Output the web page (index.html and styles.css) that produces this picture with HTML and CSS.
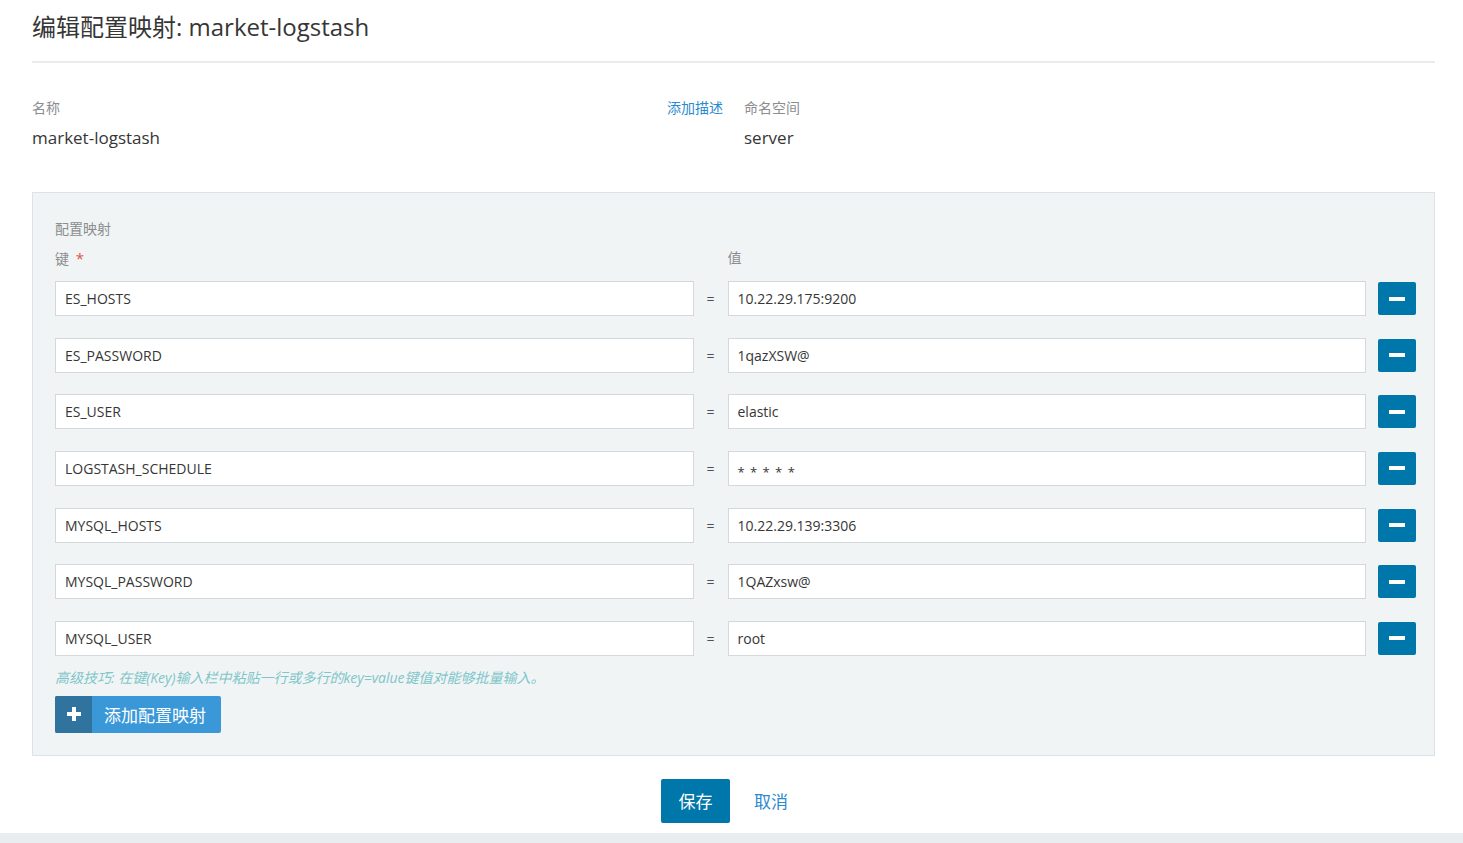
FILE: index.html
```html
<!DOCTYPE html>
<html lang="zh">
<head>
<meta charset="utf-8">
<title>编辑配置映射</title>
<link rel="stylesheet" href="styles.css">
</head>
<body>
<div class="page">
  <header class="head">
    <h1 class="title">编辑配置映射: market-logstash</h1>
  </header>

  <section class="meta">
    <div class="meta-col">
      <div class="meta-top">
        <span class="label">名称</span>
        <a class="link">添加描述</a>
      </div>
      <div class="meta-value">market-logstash</div>
    </div>
    <div class="meta-col">
      <div class="meta-top"><span class="label">命名空间</span></div>
      <div class="meta-value">server</div>
    </div>
  </section>

  <section class="panel">
    <div class="label panel-title">配置映射</div>
    <div class="kv-row kv-head">
      <div class="kv-cell label">键 <span class="req">*</span></div>
      <div class="kv-eq"></div>
      <div class="kv-cell label">值</div>
      <div class="kv-btn-space"></div>
    </div>

    <div class="kv-list">
      <div class="kv-row">
        <div class="kv-cell"><div class="input">ES_HOSTS</div></div>
        <div class="kv-eq">=</div>
        <div class="kv-cell"><div class="input">10.22.29.175:9200</div></div>
        <button class="minus"><span class="bar"></span></button>
      </div>
      <div class="kv-row">
        <div class="kv-cell"><div class="input">ES_PASSWORD</div></div>
        <div class="kv-eq">=</div>
        <div class="kv-cell"><div class="input">1qazXSW@</div></div>
        <button class="minus"><span class="bar"></span></button>
      </div>
      <div class="kv-row">
        <div class="kv-cell"><div class="input">ES_USER</div></div>
        <div class="kv-eq">=</div>
        <div class="kv-cell"><div class="input">elastic</div></div>
        <button class="minus"><span class="bar"></span></button>
      </div>
      <div class="kv-row">
        <div class="kv-cell"><div class="input">LOGSTASH_SCHEDULE</div></div>
        <div class="kv-eq">=</div>
        <div class="kv-cell"><div class="input stars">* * * * *</div></div>
        <button class="minus"><span class="bar"></span></button>
      </div>
      <div class="kv-row">
        <div class="kv-cell"><div class="input">MYSQL_HOSTS</div></div>
        <div class="kv-eq">=</div>
        <div class="kv-cell"><div class="input">10.22.29.139:3306</div></div>
        <button class="minus"><span class="bar"></span></button>
      </div>
      <div class="kv-row">
        <div class="kv-cell"><div class="input">MYSQL_PASSWORD</div></div>
        <div class="kv-eq">=</div>
        <div class="kv-cell"><div class="input">1QAZxsw@</div></div>
        <button class="minus"><span class="bar"></span></button>
      </div>
      <div class="kv-row">
        <div class="kv-cell"><div class="input">MYSQL_USER</div></div>
        <div class="kv-eq">=</div>
        <div class="kv-cell"><div class="input">root</div></div>
        <button class="minus"><span class="bar"></span></button>
      </div>
    </div>

    <p class="hint">高级技巧: 在键(Key)输入栏中粘贴一行或多行的key=value键值对能够批量输入。</p>

    <button class="add-btn">
      <span class="add-icon">
        <svg width="14" height="14" viewBox="0 0 14 14"><rect x="5" y="0" width="4" height="14" fill="#fff"/><rect x="0" y="5" width="14" height="4" fill="#fff"/></svg>
      </span>
      <span class="add-text">添加配置映射</span>
    </button>
  </section>

  <div class="actions">
    <button class="save">保存</button>
    <a class="cancel">取消</a>
  </div>
</div>
<div class="footer-bar"></div>
</body>
</html>
```

FILE: styles.css
```css
* { box-sizing: border-box; }

html, body {
  margin: 0;
  padding: 0;
  background: #ffffff;
}

body {
  font-family: "Open Sans", "Noto Sans CJK SC", sans-serif;
  color: #363636;
}

.page {
  padding: 0 28px 0 32px;
}

.head {
  height: 63px;
  padding-top: 8px;
  border-bottom: 2px solid #e8ecee;
}

.title {
  margin: 0;
  font-size: 24px;
  line-height: 38px;
  font-weight: 400;
  color: #363636;
}

.meta {
  display: grid;
  grid-template-columns: 1fr 1fr;
  column-gap: 21px;
  margin-top: 36px;
}

.meta-top {
  display: flex;
  justify-content: space-between;
  align-items: center;
  height: 18px;
}

.label {
  font-size: 14px;
  line-height: 18px;
  color: #8b8d8f;
}

.link {
  font-size: 14px;
  line-height: 18px;
  color: #2a8ad0;
  cursor: pointer;
}

.meta-value {
  margin-top: 9px;
  font-size: 17px;
  line-height: 24px;
  color: #363636;
}

.panel {
  margin-top: 42px;
  background: #f1f4f5;
  border: 1px solid #dce3e6;
  padding: 27px 18px 22px 22px;
}

.panel-title {
  margin-bottom: 11px;
}

.kv-row {
  display: flex;
  align-items: center;
}

.kv-head {
  margin-bottom: 14px;
  height: 18px;
}

.kv-cell {
  flex: 1 1 0;
  min-width: 0;
}

.req {
  color: #e2514d;
  margin-left: 3px;
  font-size: 15px;
}

.kv-eq {
  width: 34px;
  flex: none;
  text-align: center;
  font-size: 14px;
  color: #4d5258;
}

.kv-btn-space {
  width: 50px;
  flex: none;
}

.kv-list {
  display: flex;
  flex-direction: column;
  gap: 21.67px;
}

.input {
  height: 35px;
  background: #ffffff;
  border: 1px solid #d1d9dc;
  padding: 0 9px;
  font-size: 14px;
  line-height: 33px;
  color: #363636;
  white-space: nowrap;
  overflow: hidden;
}

.input.stars {
  font-size: 13px;
  line-height: 40px;
  letter-spacing: 1px;
}

.minus {
  flex: none;
  width: 38px;
  height: 33px;
  margin-left: 12px;
  border: none;
  border-radius: 2px;
  background: #0077aa;
  padding: 0;
  display: flex;
  align-items: center;
  justify-content: center;
  cursor: pointer;
}

.minus .bar {
  display: block;
  width: 16px;
  height: 4px;
  background: #ffffff;
}

.hint {
  margin: 13px 0 9px;
  font-size: 14px;
  line-height: 18px;
  font-style: italic;
  color: #7ec6ca;
}

.add-btn {
  display: flex;
  align-items: stretch;
  height: 37px;
  padding: 0;
  border: none;
  border-radius: 2px;
  overflow: hidden;
  background: #3a98d9;
  font-family: "Open Sans", "Noto Sans CJK SC", sans-serif;
  cursor: pointer;
}

.add-icon {
  width: 37px;
  background: #31739f;
  display: flex;
  align-items: center;
  justify-content: center;
}

.add-text {
  display: flex;
  align-items: center;
  padding: 0 15px 0 12px;
  font-size: 17px;
  color: #ffffff;
}

.actions {
  display: flex;
  justify-content: center;
  align-items: center;
  gap: 24px;
  margin-top: 23px;
  padding-right: 18px;
}

.save {
  width: 69px;
  height: 44px;
  border: none;
  border-radius: 2px;
  background: #0077aa;
  color: #ffffff;
  font-family: "Open Sans", "Noto Sans CJK SC", sans-serif;
  font-size: 17px;
  cursor: pointer;
}

.cancel {
  font-size: 17px;
  color: #2a8ad0;
  cursor: pointer;
}

.footer-bar {
  margin-top: 10px;
  height: 12px;
  background: #e9edef;
}
```
